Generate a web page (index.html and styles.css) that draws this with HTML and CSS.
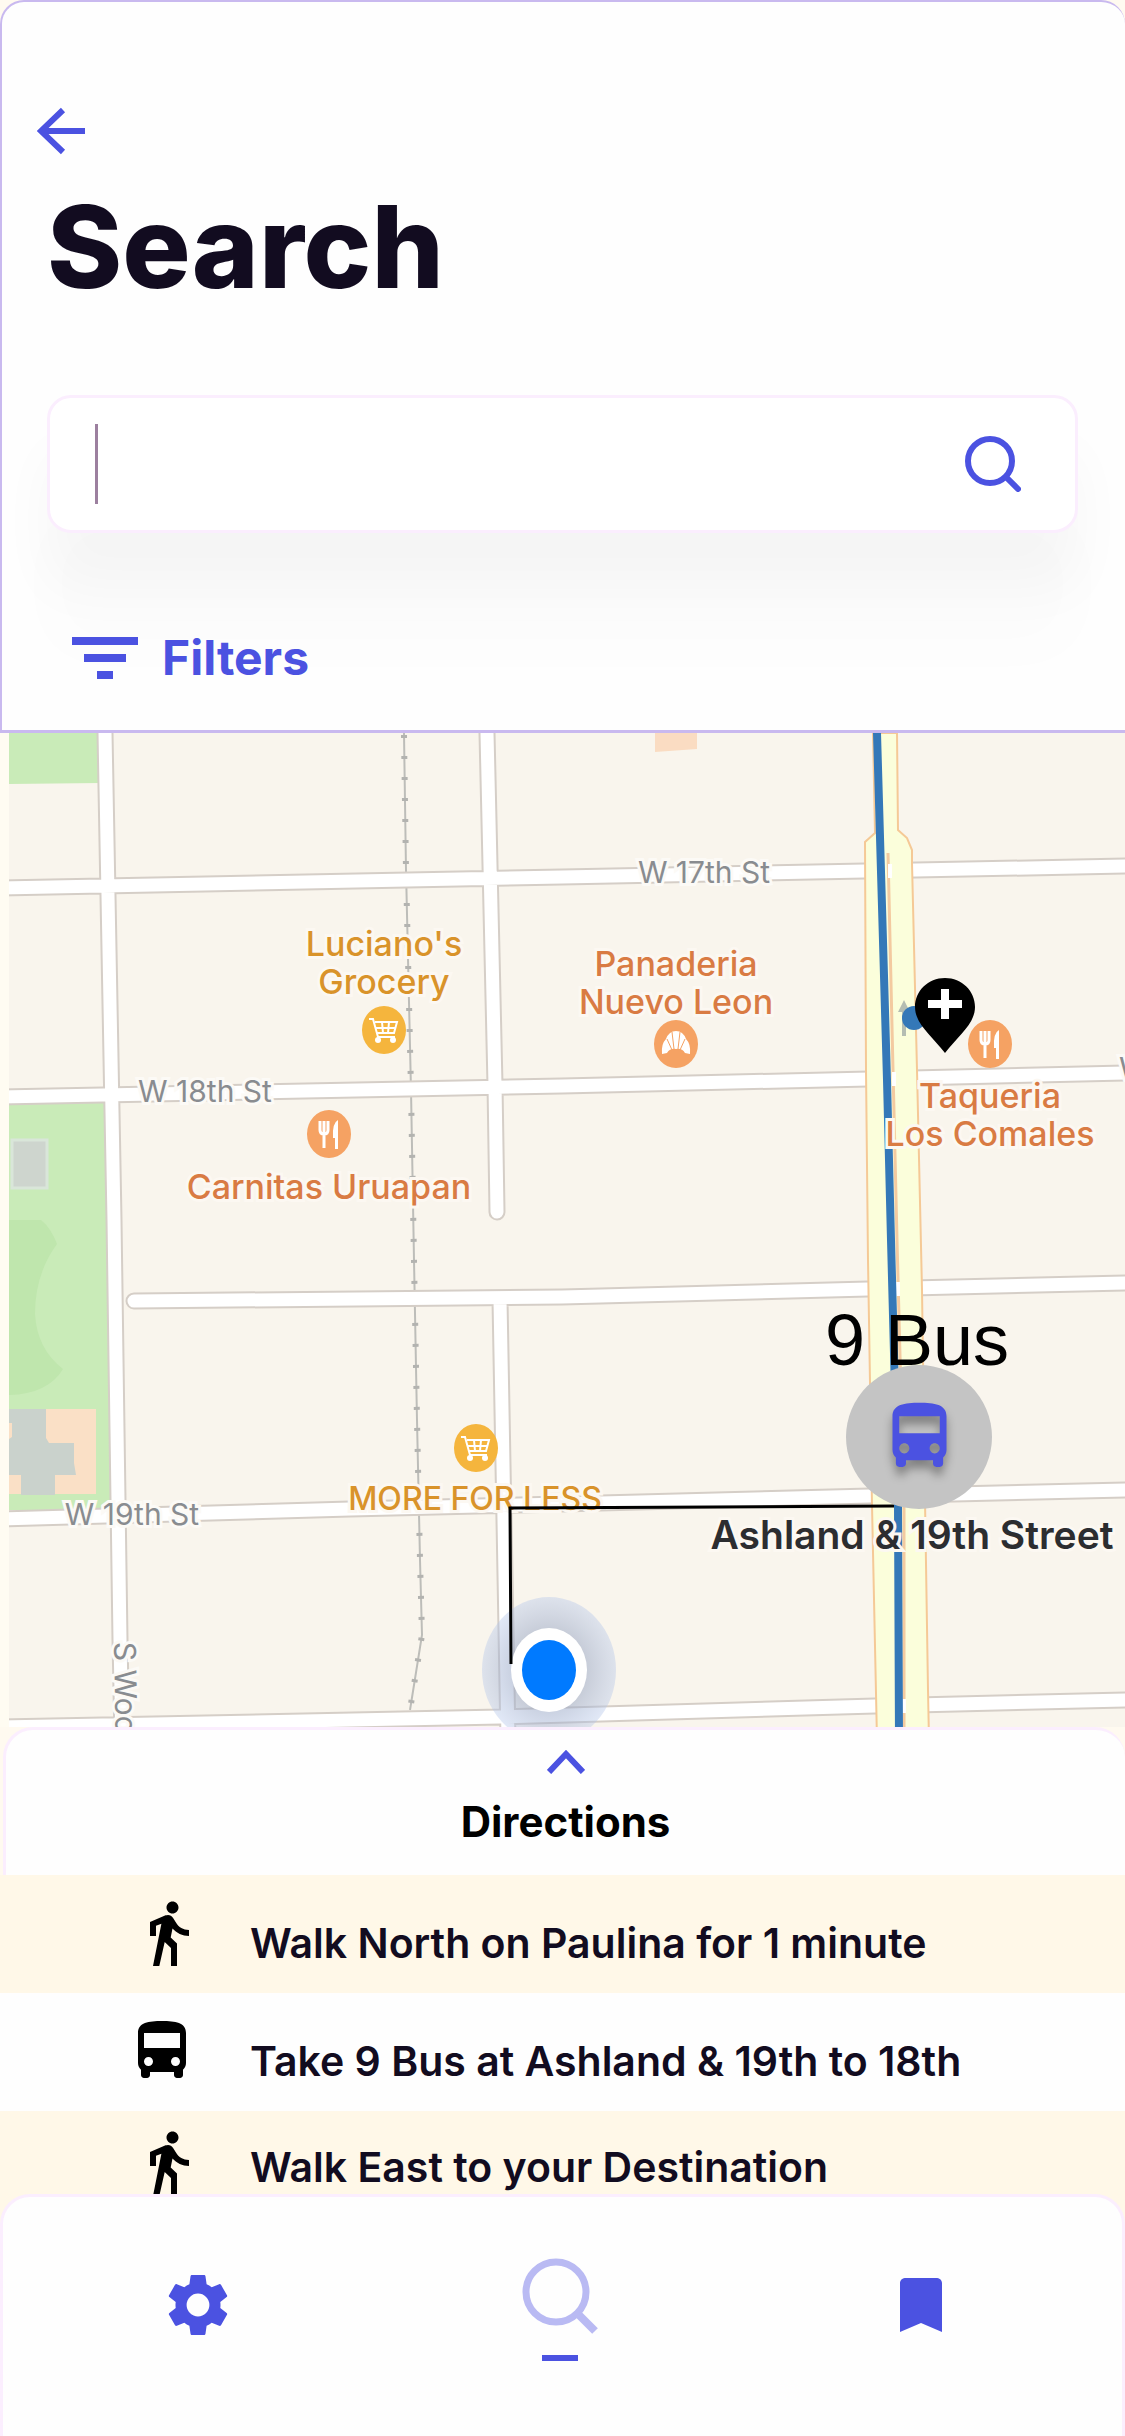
FILE: index.html
```html
<!DOCTYPE html>
<html lang="en">
<head>
<meta charset="utf-8">
<meta name="viewport" content="width=device-width, initial-scale=1">
<title>Search</title>
<link rel="stylesheet" href="styles.css">
</head>
<body>
<svg class="sprite" aria-hidden="true">
  <symbol id="walk" viewBox="0 0 24 24"><path d="M13.5 5.5c1.1 0 2-.9 2-2s-.9-2-2-2-2 .9-2 2 .9 2 2 2zM9.8 8.900L7 23h2.100l1.800-8 2.100 2v6h2v-7.500l-2.100-2 .6-3C14.800 12 16.800 13 19 13v-2c-1.900 0-3.500-1-4.300-2.400l-1-1.600c-.4-.6-1-1-1.700-1-.3 0-.5.1-.8.1L6 8.300V13h2V9.600l1.800-.7z"/></symbol>
  <symbol id="bus" viewBox="0 0 24 24"><path d="M4 16c0 .88.39 1.67 1 2.220V20c0 .55.45 1 1 1h1c.55 0 1-.45 1-1v-1h8v1c0 .55.45 1 1 1h1c.55 0 1-.45 1-1v-1.780c.61-.55 1-1.340 1-2.220V6c0-3.500-3.580-4-8-4s-8 .5-8 4v10zm3.500 1c-.83 0-1.500-.67-1.500-1.500S6.670 14 7.500 14s1.500.67 1.500 1.500S8.330 17 7.500 17zm9 0c-.83 0-1.500-.67-1.500-1.500s.67-1.500 1.500-1.500 1.500.67 1.500 1.500-.67 1.500-1.500 1.500zm1.500-6H6V6h12v5z"/></symbol>
  <symbol id="cart" viewBox="-22 -24 44 48">
    <ellipse rx="22" ry="24" fill="#f5b53d"/>
    <path d="M-15-11h4l5 18H11M-9-8H13L10 3H-7M-2-8l1 11M5-8L4 3M-8-2H11" fill="none" stroke="#fff" stroke-width="2"/>
    <circle cx="-6" cy="10" r="3" fill="#fff"/><circle cx="9" cy="10" r="3" fill="#fff"/>
  </symbol>
  <symbol id="food" viewBox="-22 -24 44 48">
    <ellipse rx="22" ry="24" fill="#f5a263"/>
    <path d="M-9-13v9q0 4 4 4t4-4v-9M-5-13V14" fill="none" stroke="#fff" stroke-width="3"/>
    <path d="M9-14V15H6V4H4Q3-11 9-14z" fill="#fff"/>
  </symbol>
</svg>

<header class="top">
  <button class="back" type="button" aria-label="Back">
    <svg viewBox="0 0 48 48"><path d="M48 24H5M26 3L4 24l22 21" fill="none" stroke="currentColor" stroke-width="6"/></svg>
  </button>
  <h1 class="title">Search</h1>
  <form class="search">
    <span class="caret"></span>
    <input class="search-input" type="text" aria-label="Search">
    <button class="search-button" type="submit" aria-label="Search">
      <svg viewBox="0 0 56 56"><circle cx="25" cy="25" r="22" fill="none" stroke="currentColor" stroke-width="6"/><path d="M41 41l12 12" stroke="currentColor" stroke-width="6" stroke-linecap="round"/></svg>
    </button>
  </form>
  <button class="filters" type="button">
    <svg viewBox="0 0 66 42"><path d="M0 0h66v8H0zM12 17h42v8H12zM25 34h16v8H25z" fill="currentColor"/></svg>
    Filters
  </button>
</header>

<main>
  <svg class="map" viewBox="0 733 1125 994" role="img" aria-label="Map of the route">
    <defs>
      <radialGradient id="halo"><stop offset=".5" stop-color="#8e9dbd" stop-opacity=".5"/><stop offset="1" stop-color="#b4c6ea" stop-opacity=".4"/></radialGradient>
      <path id="streets" d="M0 888L562 877L1125 866M0 1097L562 1086L1125 1073M134 1301L562 1297L868 1289L1125 1283M0 1519L350 1509L562 1504L870 1496L1125 1490M0 1727L500 1717L875 1706L1125 1700M105 733L114 1220L120 1640L122 1740M487 733L495 1085L497 1212M500 1300L504 1520L508 1740"/>
    </defs>
    <rect x="0" y="733" width="1125" height="994" fill="#f9f5ed"/>
    <path d="M9 733h92v50l-92 1zM9 1100h98l5 410H9z" fill="#c9ebb8"/>
    <path d="M9 1220h32q10 8 16 24q-22 30-22 70q2 35 28 55q-15 25-54 26z" fill="#bfe6ad"/>
    <path d="M12 1140h35v48H12z" fill="#ced5ce" stroke="#d9e6d9" stroke-width="3"/>
    <path d="M9 1409h87v85H9z" fill="#fae0c6"/>
    <path d="M9 1409h37v29l3 5h25v20l2 12H55v20H21v-20H9v-36l3-2v-14H9z" fill="#cad2cc"/>
    <path d="M655 733h42v16l-42 3z" fill="#fadcc2"/>
    <path d="M404 733L406 870L411 1090L414 1260L417 1420L420 1560L422 1635L410 1710" fill="none" stroke="#bdbdb9" stroke-width="2"/>
    <path d="M404 735L406 870L411 1090L414 1260L417 1420L420 1560L422 1635L410 1710" fill="none" stroke="#b3b3b0" stroke-width="6" stroke-dasharray="3 18"/>
    <use href="#streets" fill="none" stroke="#d5cec7" stroke-width="17" stroke-linecap="round"/>
    <use href="#streets" fill="none" stroke="#fff" stroke-width="13" stroke-linecap="round"/>
    <path d="M873 733L875 833L865 842L866 1070L868 1260L872 1505L877 1740H929L928 1690L925 1500L922 1290L917 1070L912 863V850L907 838L898 830L897 733z" fill="#fbfedb" stroke="#f5c996" stroke-width="2"/>
    <path d="M888 853L893 1070L897 1240L904 1510V1740" fill="none" stroke="#f3caa0" stroke-width="3"/>
    <path d="M890 864v14M894 1072v14M898 1282v14M904 1699v14" stroke="#fff" stroke-width="4"/>
    <path d="M877 733L887 1080L891 1240L898 1505L899 1740" fill="none" stroke="#3478b8" stroke-width="8"/>
    <path d="M0 733h9v994H0z" fill="#fffcf2"/>

    <g class="street-name">
      <text x="704" y="883">W 17th St</text>
      <text x="205" y="1102">W 18th St</text>
      <text x="132" y="1525">W 19th St</text>
      <text class="from-start" x="1119" y="1079">W</text>
      <text class="from-start" transform="translate(114 1642) rotate(89)">S Woo</text>
    </g>
    <g class="place shop">
      <text x="384" y="956">Luciano's</text>
      <text x="384" y="994">Grocery</text>
      <text class="caps" x="475" y="1510">MORE FOR LESS</text>
    </g>
    <g class="place eatery">
      <text x="329" y="1199">Carnitas Uruapan</text>
      <text x="676" y="976">Panaderia</text>
      <text x="676" y="1014">Nuevo Leon</text>
      <text x="990" y="1108">Taqueria</text>
      <text x="990" y="1146">Los Comales</text>
    </g>
    <text class="place stop" x="912" y="1549">Ashland &amp; 19th Street</text>

    <use href="#cart" x="362" y="1006" width="44" height="48"/>
    <use href="#cart" x="454" y="1424" width="44" height="48"/>
    <use href="#food" x="307" y="1110" width="44" height="48"/>
    <use href="#food" x="968" y="1020" width="44" height="48"/>
    <ellipse cx="676" cy="1044" rx="22" ry="24" fill="#f5a263"/>
    <path d="M662 1054q-1-10 4-15q3-8 10-8t10 8q5 5 4 15l-5-1q-3-5-9-4q-6-1-9 4z" fill="#fff"/>
    <path d="M667 1039l5 11M672 1032l2 17M680 1032l-2 17M685 1039l-5 11" stroke="#f5a263" stroke-width="1"/>

    <path d="M904 1000l6 12h-4v24h-4v-24h-4z" fill="#b4bdb2"/>
    <circle cx="914" cy="1018" r="12" fill="#3478b8"/>
    <path d="M945 978c17 0 30 13 30 29c0 17-17 29-30 46c-13-17-30-29-30-46c0-16 13-29 30-29z"/>
    <path d="M941 989h8v11h13v8h-13v11h-8v-11h-13v-8h13z" fill="#fff"/>

    <ellipse cx="549" cy="1670" rx="67" ry="73" fill="url(#halo)"/>
    <ellipse cx="549" cy="1670" rx="38" ry="42" fill="#fff"/>
    <ellipse cx="549" cy="1670" rx="27" ry="30" fill="#007aff"/>
    <path d="M511 1664L510 1508L894 1506" fill="none" stroke="#000" stroke-width="3"/>

    <ellipse cx="919" cy="1437" rx="73" ry="72" fill="#c4c4c4"/>
    <use class="bus-marker" href="#bus" x="879" y="1396" width="81" height="81"/>
    <text class="bus-name" x="917" y="1365">9 Bus</text>
  </svg>

  <section class="directions">
    <div class="sheet-head">
      <button class="expand" type="button" aria-label="Show all directions">
        <svg viewBox="0 0 38 26"><path d="M2 24L19 6l17 18" fill="none" stroke="currentColor" stroke-width="6"/></svg>
      </button>
      <h2 class="sheet-title">Directions</h2>
    </div>
    <ol class="steps">
      <li class="step"><svg class="step-icon" viewBox="0 0 24 24"><use href="#walk"/></svg><span>Walk North on Paulina for 1 minute</span></li>
      <li class="step"><svg class="step-icon" viewBox="2 0 24 24"><use href="#bus" width="24" height="24"/></svg><span>Take 9 Bus at Ashland &amp; 19th to 18th</span></li>
      <li class="step"><svg class="step-icon" viewBox="0 0 24 24"><use href="#walk"/></svg><span>Walk East to your Destination</span></li>
    </ol>
  </section>
</main>

<nav class="tabs" aria-label="Main">
  <a class="tab" href="#settings" aria-label="Settings">
    <svg viewBox="0 0 24 24"><path fill="currentColor" d="M19.430 12.980c.04-.32.07-.64.07-.98s-.03-.66-.07-.98l2.110-1.650c.19-.15.24-.42.12-.64l-2-3.460c-.12-.22-.39-.3-.61-.22l-2.490 1c-.52-.4-1.080-.73-1.690-.98l-.38-2.650C14.460 2.180 14.250 2 14 2h-4c-.25 0-.46.18-.49.42l-.38 2.650c-.61.25-1.170.59-1.690.98l-2.490-1c-.23-.09-.49 0-.61.22l-2 3.460c-.13.22-.07.49.12.64l2.110 1.650c-.04.32-.07.65-.07.98s.03.66.07.98l-2.110 1.650c-.19.15-.24.42-.12.64l2 3.460c.12.22.39.3.61.22l2.490-1c.52.4 1.080.73 1.690.98l.38 2.650c.03.24.24.42.49.42h4c.25 0 .46-.18.49-.42l.38-2.650c.61-.25 1.170-.59 1.690-.98l2.490 1c.23.09.49 0 .61-.22l2-3.460c.12-.22.07-.49-.12-.64l-2.110-1.650zM12 15.800a3.800 3.800 0 1 1 0-7.600a3.800 3.800 0 0 1 0 7.600z"/></svg>
  </a>
  <a class="tab tab-current" href="#search" aria-label="Search" aria-current="page">
    <svg viewBox="0 0 78 78"><circle cx="35" cy="35" r="30" fill="none" stroke="currentColor" stroke-width="7"/><path d="M57 57l17 17" stroke="currentColor" stroke-width="8"/></svg>
  </a>
  <a class="tab" href="#saved" aria-label="Saved">
    <svg viewBox="0 0 24 24"><path fill="currentColor" d="M17 3H7c-1.100 0-2 .6-2 1.700V21l7-3 7 3V4.700C19 3.600 18.100 3 17 3z"/></svg>
  </a>
</nav>
</body>
</html>
```
FILE: styles.css
```css
* {
  box-sizing: border-box;
}

body {
  margin: 0;
  background: #fffaf0;
  color: #120c20;
  font-family: Inter, "Liberation Sans", sans-serif;
}

button {
  padding: 0;
  border: 0;
  background: none;
  color: #4b52e1;
  font: inherit;
}

svg {
  display: block;
}

.sprite {
  position: absolute;
  width: 0;
  height: 0;
}

/* Header */
.top {
  padding: 105px 47px 44px 45px;
  border: 2px solid #c9b9ef;
  border-right: 0;
  border-bottom-width: 3px;
  border-radius: 24px 24px 0 0;
  background: #fefefe;
  overflow: hidden;
}

.back {
  display: block;
  margin-left: -10px;
}

.back svg {
  width: 48px;
  height: 48px;
}

.title {
  margin: 24px 0 80px;
  font-size: 114px;
  font-weight: 800;
  line-height: 136px;
}

.search {
  display: flex;
  align-items: center;
  height: 138px;
  padding: 0 54px 0 45px;
  border: 3px solid #fbeefe;
  border-radius: 24px;
  background: #fff;
  box-shadow: 0 56px 56px rgba(0, 0, 0, 0.03), 0 120px 64px rgba(0, 0, 0, 0.01);
}

.caret {
  width: 3px;
  height: 80px;
  background: #9c809f;
}

.search-input {
  flex: 1;
  min-width: 0;
  height: 80px;
  border: 0;
  outline: 0;
  background: none;
  font: inherit;
  font-size: 42px;
}

.search-button svg {
  width: 56px;
  height: 56px;
}

.filters {
  display: flex;
  align-items: center;
  gap: 24px;
  margin: 97px 0 0 25px;
  font-size: 48px;
  font-weight: 700;
  line-height: 56px;
}

.filters svg {
  width: 66px;
  height: 42px;
}

/* Map */
.map {
  width: 100%;
  height: auto;
}

.map text {
  text-anchor: middle;
  paint-order: stroke;
}

.map .from-start {
  text-anchor: start;
}

.street-name {
  fill: #898c90;
  stroke: #fcfaf6;
  stroke-width: 6px;
  font-size: 30px;
}

.place {
  stroke: #fcf8f2;
  stroke-width: 6px;
  font-size: 34px;
  font-weight: 500;
}

.shop {
  fill: #d9932a;
}

.shop .caps {
  font-size: 32px;
}

.eatery {
  fill: #d97b43;
}

.stop {
  fill: #2c2d30;
  font-size: 39px;
  font-weight: 600;
}

.bus-marker {
  fill: #4b52e1;
  filter: drop-shadow(0 8px 5px rgba(0, 0, 0, 0.35));
}

.bus-name {
  font-family: "Liberation Sans", sans-serif;
  font-size: 72px;
}

/* Directions */
.sheet-head {
  display: flex;
  flex-direction: column;
  align-items: center;
  gap: 22px;
  height: 148px;
  margin-left: 3px;
  padding-top: 18px;
  border: 3px solid #fbeefe;
  border-right: 0;
  border-bottom: 0;
  border-radius: 30px 30px 0 0;
  background: #fefefe;
}

.expand svg {
  width: 38px;
  height: 26px;
}

.sheet-title {
  margin: 0;
  color: #000;
  font-size: 42px;
  font-weight: 700;
  line-height: 52px;
}

.steps {
  margin: 0;
  padding: 0;
  list-style: none;
}

.step {
  display: flex;
  align-items: flex-start;
  gap: 46px;
  height: 118px;
  padding: 22px 40px 0 132px;
  background: #fefefe;
  font-size: 41px;
  font-weight: 600;
  line-height: 48px;
}

.step:nth-child(odd) {
  background: #fff8e8;
}

.step:last-child {
  padding-top: 16px;
}

.step span {
  padding-top: 22px;
}

.step:last-child span {
  padding-top: 16px;
}

.step-icon {
  flex: none;
  width: 72px;
  height: 72px;
  fill: #000;
}

/* Bottom tabs, drawn over the last step */
.tabs {
  position: relative;
  display: flex;
  align-items: flex-start;
  justify-content: space-between;
  height: 242px;
  margin-top: -35px;
  padding: 60px 165px 0 159px;
  border: 3px solid #fbeefe;
  border-bottom: 0;
  border-radius: 30px 30px 0 0;
  background: #fefefe;
}

.tab {
  padding-top: 12px;
  color: #4b52e1;
}

.tab svg {
  width: 72px;
  height: 72px;
}

.tab-current {
  display: flex;
  flex-direction: column;
  align-items: center;
  gap: 20px;
  padding-top: 0;
  color: #b9baf3;
}

.tab-current svg {
  width: 78px;
  height: 78px;
}

.tab-current::after {
  width: 36px;
  height: 6px;
  background: #4b52e1;
  content: "";
}
```
